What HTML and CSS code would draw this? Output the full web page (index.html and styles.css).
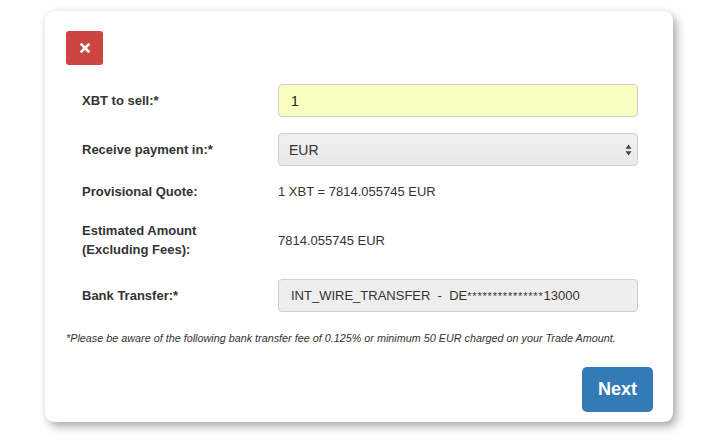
FILE: index.html
```html
<!DOCTYPE html>
<html>
<head>
<meta charset="utf-8">
<link rel="stylesheet" href="styles.css">
</head>
<body>
<div class="page">
  <div class="card">
    <div class="top">
      <button class="close" aria-label="Close">
        <svg width="10" height="10" viewBox="0 0 10 10"><path d="M1.5 1.5 L8.5 8.5 M8.5 1.5 L1.5 8.5" stroke="#fff" stroke-width="2.6" stroke-linecap="square"/></svg>
      </button>
    </div>
    <div class="form">
      <div class="row r-input">
        <div class="label">XBT to sell:*</div>
        <div class="value"><div class="field yellow">1</div></div>
      </div>
      <div class="row r-select">
        <div class="label">Receive payment in:*</div>
        <div class="value">
          <div class="field select">EUR
            <svg class="arrows" width="7" height="12" viewBox="0 0 7 12"><path d="M3.5 0.5 L6.5 4.8 L0.5 4.8 Z M3.5 11.5 L6.5 7.2 L0.5 7.2 Z" fill="#444"/></svg>
          </div>
        </div>
      </div>
      <div class="row r-quote">
        <div class="label">Provisional Quote:</div>
        <div class="value text">1 XBT = 7814.055745 EUR</div>
      </div>
      <div class="row r-est">
        <div class="label">Estimated Amount<br>(Excluding Fees):</div>
        <div class="value text">7814.055745 EUR</div>
      </div>
      <div class="row r-bank">
        <div class="label">Bank Transfer:*</div>
        <div class="value"><div class="field grey">INT_WIRE_TRANSFER&nbsp; -&nbsp; DE<span class="stars">***************</span>13000</div></div>
      </div>
    </div>
    <p class="note">*Please be aware of the following bank transfer fee of 0.125% or minimum 50 EUR charged on your Trade Amount.</p>
    <div class="footer">
      <button class="next">Next</button>
    </div>
  </div>
</div>
</body>
</html>
```

FILE: styles.css
```css
* { box-sizing: border-box; }
html, body { margin: 0; padding: 0; background: #fff; }
body { font-family: "Liberation Sans", Arial, Helvetica, sans-serif; color: #333; }
.page { padding: 11px 47px 21px 45px; }
.card {
  width: 628px;
  height: 411px;
  background: #fff;
  border-radius: 9px;
  box-shadow: 4px 5px 10px rgba(0,0,0,0.3), 0 0 6px rgba(0,0,0,0.07);
  padding: 20px 20px 10px 21px;
  display: flex;
  flex-direction: column;
}
.top { height: 34px; margin-bottom: 19px; }
.close {
  width: 37px; height: 34px;
  background: #cd4543;
  border: 0; border-radius: 3px;
  display: flex; align-items: center; justify-content: center;
  padding: 0; margin: 0;
}
.form { display: flex; flex-direction: column; }
.row { display: flex; align-items: center; }
.label {
  width: 212px;
  padding-left: 16px;
  font-weight: bold;
  font-size: 13px;
  line-height: 19px;
  color: #333;
}
.value { flex: 0 0 360px; font-size: 13px; }
.text { color: #333; }
.r-input { height: 33px; margin-bottom: 16px; }
.r-select { height: 33px; margin-bottom: 16px; }
.r-quote { height: 18px; margin-bottom: 21px; }
.r-est { height: 38px; margin-bottom: 20px; }
.r-bank { height: 33px; }
.field {
  height: 33px;
  border: 1px solid #cfcfcf;
  border-radius: 4px;
  padding: 0 12px;
  display: flex; align-items: center;
  font-size: 14px;
  color: #333;
  position: relative;
}
.yellow { background: #fafdc0; color: #222; }
.select { background: linear-gradient(#f0f0f0, #e9e9e9); padding-left: 10px; }
.grey { background: #eeeeee; font-size: 13px; }
.stars { font-size: 11px; letter-spacing: 0.8px; }
.arrows { position: absolute; right: 5px; top: 10px; }
.note {
  margin: 19px 0 0 0;
  font-size: 10.8px;
  line-height: 15px;
  font-style: italic;
  color: #333;
}
.footer { display: flex; justify-content: flex-end; margin-top: 21px; }
.next {
  width: 71px; height: 45px;
  background: #337ab7;
  color: #fff;
  border: 0;
  border-radius: 5px;
  font-family: "Liberation Sans", Arial, sans-serif;
  font-weight: bold;
  font-size: 18px;
  padding: 0;
}
```
